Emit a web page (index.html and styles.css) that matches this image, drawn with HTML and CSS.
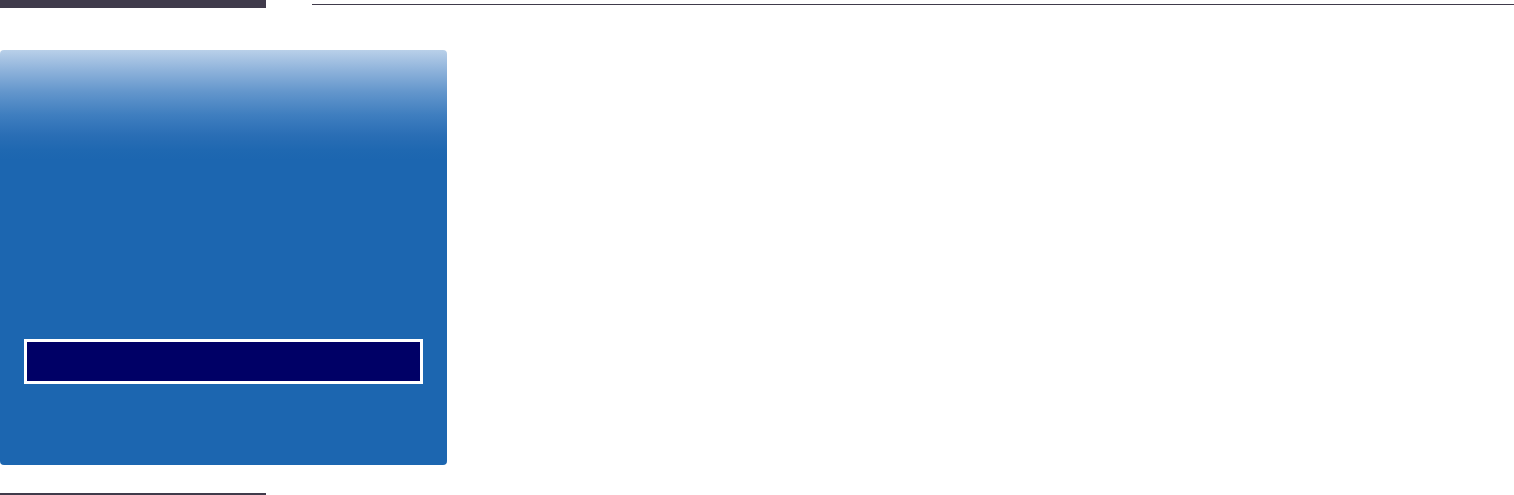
FILE: index.html
```html
<!DOCTYPE html>
<html>
<head>
<meta charset="utf-8">
<link rel="stylesheet" href="styles.css">
</head>
<body>
<div class="page">
  <header class="top">
    <div class="top-tab"></div>
    <div class="top-rule"></div>
  </header>
  <section class="panel">
    <div class="menu">
      <div class="menu-item selected"></div>
    </div>
  </section>
  <footer class="bottom-rule"></footer>
</div>
</body>
</html>
```
FILE: styles.css
```css
html, body {
  margin: 0;
  padding: 0;
  background: #ffffff;
  font-family: "Liberation Sans", Arial, sans-serif;
}
.page {
  width: 1514px;
  height: 495px;
  position: relative;
  overflow: hidden;
}
.top {
  display: flex;
  align-items: flex-start;
  height: 8px;
}
.top-tab {
  width: 266px;
  height: 8px;
  background: #403b4b;
}
.top-rule {
  margin-left: 46px;
  margin-top: 4px;
  flex: 1;
  height: 1px;
  background: #403b4b;
}
.panel {
  margin-top: 42px;
  width: 447px;
  height: 415px;
  border-radius: 4px;
  background: linear-gradient(to bottom, #b9d0e9 0px, #8fb3db 20px, #6396cc 42px, #3f7ebf 65px, #2a6eb5 85px, #1f68b1 100px, #1c66b0 110px, #1c66b0 100%);
  padding-top: 289px;
  box-sizing: border-box;
}
.menu {
  padding: 0 24px;
}
.menu-item {
  height: 45px;
}
.menu-item.selected {
  background: #000066;
  border: 3px solid #ffffff;
  box-sizing: border-box;
}
.bottom-rule {
  margin-top: 28px;
  width: 266px;
  height: 2px;
  background: #403b4b;
}
```
